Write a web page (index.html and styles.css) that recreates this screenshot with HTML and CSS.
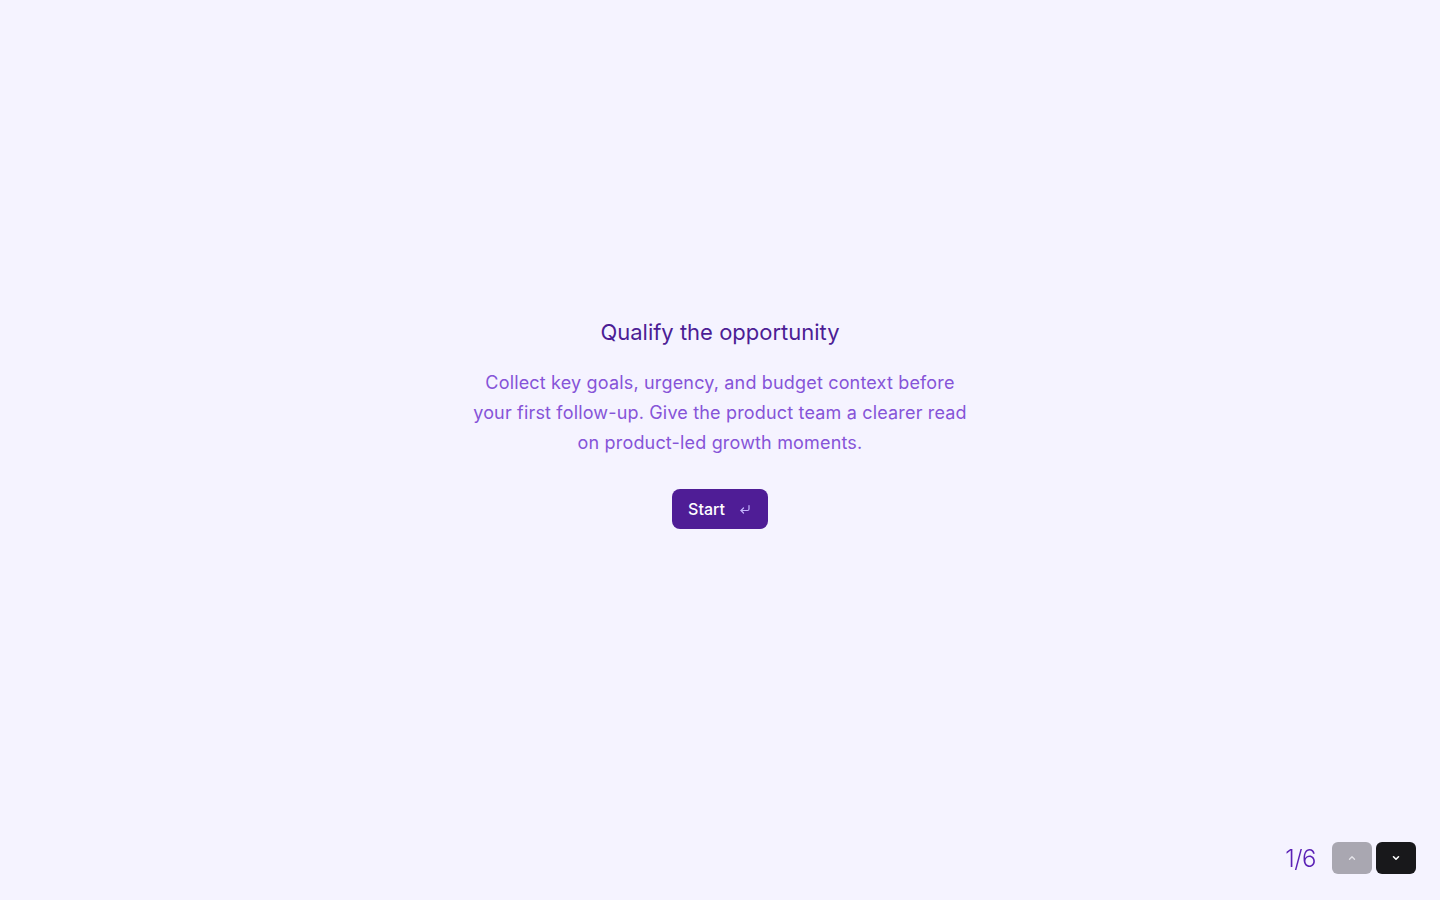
FILE: index.html
```html
<!DOCTYPE html>
<html lang="en">
<head>
<meta charset="utf-8">
<title>Qualify the opportunity</title>
<link rel="stylesheet" href="styles.css">
</head>
<body>
<main class="stage">
  <section class="intro">
    <h1 class="title">Qualify the opportunity</h1>
    <p class="lead">Collect key goals, urgency, and budget context before your first follow-up. Give the product team a clearer read on product-led growth moments.</p>
    <button class="start" type="button">
      <span>Start</span>
      <svg class="enter" width="12" height="12" viewBox="0 0 12 12" fill="none" stroke="currentColor" stroke-width="1.2" stroke-linecap="round" stroke-linejoin="round"><path d="M10 2.5v3.5a1.5 1.5 0 0 1-1.5 1.5H2"/><path d="M4.5 5L2 7.5 4.5 10"/></svg>
    </button>
  </section>
</main>
<nav class="pager">
  <span class="count">1/6</span>
  <button class="nav up" type="button" aria-label="Previous">
    <svg width="12" height="12" viewBox="0 0 12 12" fill="none" stroke="currentColor" stroke-width="1.4" stroke-linecap="round" stroke-linejoin="round"><path d="M3.5 7.25L6 4.75l2.5 2.5"/></svg>
  </button>
  <button class="nav down" type="button" aria-label="Next">
    <svg width="12" height="12" viewBox="0 0 12 12" fill="none" stroke="currentColor" stroke-width="1.6" stroke-linecap="round" stroke-linejoin="round"><path d="M3.5 4.75L6 7.25l2.5-2.5"/></svg>
  </button>
</nav>
</body>
</html>
```
FILE: styles.css
```css
* { box-sizing: border-box; }
html, body { margin: 0; height: 100%; }
body {
  background: #f5f3ff;
  font-family: Inter, "Noto Sans", sans-serif;
  overflow: hidden;
}
.stage {
  height: 100vh;
  display: flex;
  align-items: center;
  justify-content: center;
  padding-bottom: 55px;
}
.intro {
  display: flex;
  flex-direction: column;
  align-items: center;
  text-align: center;
}
.title {
  margin: 0;
  font-size: 22px;
  line-height: 32px;
  font-weight: 400;
  color: #4c1d95;
}
.lead {
  margin: 20px 0 0;
  width: 500px;
  font-size: 18px;
  line-height: 30px;
  color: #8654d8;
  letter-spacing: 0.17px;
}
.start {
  margin-top: 31px;
  height: 40px;
  display: inline-flex;
  align-items: center;
  gap: 14px;
  padding: 0 17px 0 16px;
  border: 0;
  border-radius: 8px;
  background: #4f1d96;
  color: #fff;
  font-family: inherit;
  font-size: 16px;
  font-weight: 500;
}
.enter { color: #c4b5fd; }
.pager {
  position: fixed;
  right: 24px;
  bottom: 26px;
  display: flex;
  align-items: center;
  gap: 4px;
}
.count {
  font-size: 24px;
  font-weight: 300;
  color: #5b21b6;
  margin-right: 12px;
  letter-spacing: -0.5px;
}
.nav {
  width: 40px;
  height: 32px;
  border: 0;
  border-radius: 6px;
  display: flex;
  align-items: center;
  justify-content: center;
  padding: 0;
}
.up { background: #a9a7b1; color: #e4e3e8; }
.down { background: #18181b; color: #fff; }
```
